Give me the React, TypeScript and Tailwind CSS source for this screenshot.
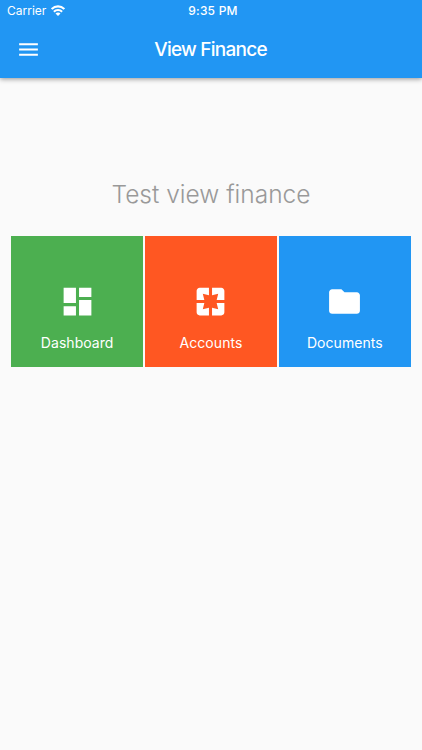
import type { IconType } from "react-icons";
import { MdDashboard, MdFolder, MdMenu, MdPages } from "react-icons/md";

type Tile = {
  label: string;
  icon: IconType;
  color: string;
};

const tiles: Tile[] = [
  { label: "Dashboard", icon: MdDashboard, color: "bg-[#4caf50]" },
  { label: "Accounts", icon: MdPages, color: "bg-[#ff5722]" },
  { label: "Documents", icon: MdFolder, color: "bg-[#2196f3]" },
];

function WifiIcon() {
  return (
    <svg className="mb-[2px] w-[14px] h-[11px]" viewBox="0 0 14 11" fill="none" stroke="currentColor" strokeWidth="2.1">
      <path d="M0.7 4.1C4.3 0.5 9.7 0.5 13.3 4.1" />
      <path d="M2.9 6.7C5.2 4.4 8.8 4.4 11.1 6.7" />
      <path d="M7 10.9L4.5 8.4C6 7.1 8 7.1 9.5 8.4Z" fill="currentColor" stroke="none" />
    </svg>
  );
}

function StatusBar() {
  return (
    <div className="grid grid-cols-3 items-center h-[22px] pl-[7px] pr-[3px] text-[12px] leading-[22px]">
      <div className="flex items-center gap-[5px]">
        <span>Carrier</span>
        <WifiIcon />
      </div>
      <span className="text-center font-medium tracking-[0.2px]">9:35 PM</span>
    </div>
  );
}

function Header() {
  return (
    <header className="relative h-[78px] bg-[#2196f3] text-white shadow-[0_1px_5px_rgba(0,0,0,0.42)]">
      <StatusBar />
      <div className="grid grid-cols-[57px_1fr_58px] items-center h-[55px]">
        <button className="flex justify-center" aria-label="Menu">
          <MdMenu className="size-[25px]" />
        </button>
        <h1 className="pt-px text-center text-[19px] font-medium tracking-[-0.75px]">View Finance</h1>
      </div>
    </header>
  );
}

function FinanceTile({ label, icon: Icon, color }: Tile) {
  return (
    <button className={`${color} flex flex-1 flex-col items-center h-[131.5px] pt-[47.5px] text-white`}>
      <Icon className="size-[37px]" />
      <span className="mt-[12px] text-[14px] leading-[22px] tracking-[0.05px]">{label}</span>
    </button>
  );
}

export default function App() {
  return (
    <div className="flex flex-col h-[750px] w-full overflow-hidden bg-[#fafafa] font-['Inter',sans-serif]">
      <Header />
      <main className="px-[11.25px] pt-[97.5px]">
        <h2 className="text-center text-[24.5px] leading-[36px] font-light text-[#999999]">
          Test view finance
        </h2>
        <div className="flex gap-[2px] mt-[24px]">
          {tiles.map((tile) => (
            <FinanceTile key={tile.label} {...tile} />
          ))}
        </div>
      </main>
    </div>
  );
}
